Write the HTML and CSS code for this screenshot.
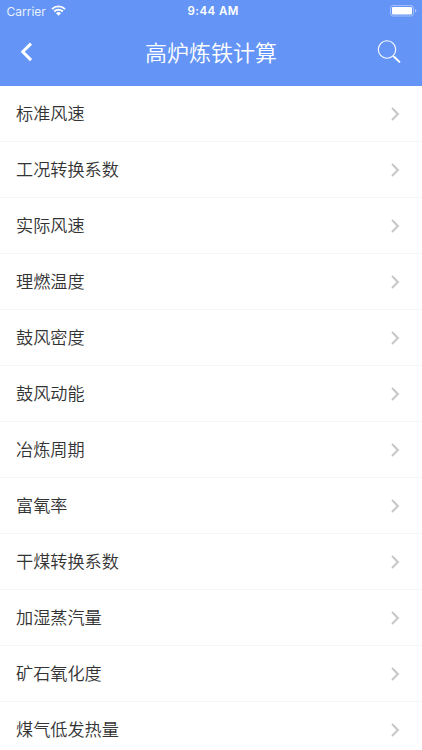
FILE: index.html
```html
<!DOCTYPE html>
<html lang="zh-CN">
<head>
<meta charset="utf-8">
<title>高炉炼铁计算</title>
<link rel="stylesheet" href="styles.css">
</head>
<body>
<header class="header">
  <div class="status">
    <div class="carrier"><span>Carrier</span>
      <svg class="wifi" width="15" height="11" viewBox="0 0 15 11"><path d="M1 4.1a9.2 9.2 0 0 1 13 0M3.2 6.5a6.1 6.1 0 0 1 8.6 0" fill="none" stroke="#fff" stroke-width="1.9"/><path d="M7.5 10.7 5 8.2a3.6 3.6 0 0 1 5 0z" fill="#fff"/></svg>
    </div>
    <time class="time">9:44 AM</time>
    <svg class="battery" width="27" height="12" viewBox="0 0 27 12"><rect x=".5" y=".5" width="23" height="10.5" rx="2.6" fill="none" stroke="#fff" stroke-opacity=".4"/><rect x="2" y="2" width="20" height="7.5" rx="1.1" fill="#fff"/><path d="M25 4v3.6q1.4-.5 1.4-1.8T25 4z" fill="#fff" fill-opacity=".5"/></svg>
  </div>
  <nav class="nav">
    <svg class="back" width="14" height="20" viewBox="0 0 14 20"><path d="m11 1.6-8.2 8.2 8.2 8.3" fill="none" stroke="#fff" stroke-width="3"/></svg>
    <h1 class="title">高炉炼铁计算</h1>
    <svg class="search" width="26" height="26" viewBox="0 0 26 26"><circle cx="11" cy="10.5" r="8.7" fill="none" stroke="#fff" stroke-width="1.1"/><path d="m17 16.8 2.2 2.2" stroke="#fff" stroke-width="1.2"/><path d="m18.6 18.3 4.8 4.6" stroke="#fff" stroke-width="2" stroke-linecap="round"/></svg>
  </nav>
</header>
<ul class="list" id="list"></ul>
<template id="row"><li class="row"><span class="label"></span><svg class="chevron" width="10" height="14" viewBox="0 0 10 14"><path d="m2 1 5.9 6L2 13" fill="none" stroke="#c7c7c9" stroke-width="2"/></svg></li></template>
<script src="script.js"></script>
</body>
</html>
```
FILE: styles.css
```css
* { box-sizing: border-box; }
body { margin: 0; height: 750px; overflow: hidden; background: #fff; color: #333; font-family: "Noto Sans CJK SC", sans-serif; }
.header { height: 85.5px; background: #6495f6; color: #fff; }
.status { height: 22px; display: grid; grid-template-columns: 1fr auto 1fr; align-items: center; padding: 0 5px 0 6.5px; font: 12px Inter, sans-serif; }
.carrier { display: flex; align-items: center; gap: 5px; color: #e8effe; }
.wifi { margin-top: -2px; }
.time { font-size: 11.5px; font-weight: 600; letter-spacing: .45px; padding-left: 3px; }
.battery { justify-self: end; margin-top: -1px; }
.nav { height: 60px; display: grid; grid-template-columns: 26px 1fr 26px; align-items: center; padding: 0 20px; }
.title { margin: 0; padding-bottom: 1px; text-align: center; font-size: 22px; font-weight: 350; line-height: 31px; }
.list { margin: 0; padding: .5px 0 0; list-style: none; }
.row { height: 56px; padding: 0 22px 0 16px; display: flex; align-items: center; justify-content: space-between; border-bottom: 1px solid #f6f6f6; font-size: 17.15px; font-weight: 350; }
.label { line-height: 26px; padding-bottom: 1px; }
```
FILE: script.js
```js
const names = ["标准风速", "工况转换系数", "实际风速", "理燃温度", "鼓风密度", "鼓风动能", "冶炼周期", "富氧率", "干煤转换系数", "加湿蒸汽量", "矿石氧化度", "煤气低发热量"];
const template = document.getElementById("row");
for (const name of names) {
  const row = template.content.cloneNode(true);
  row.querySelector(".label").textContent = name;
  document.getElementById("list").append(row);
}
```
